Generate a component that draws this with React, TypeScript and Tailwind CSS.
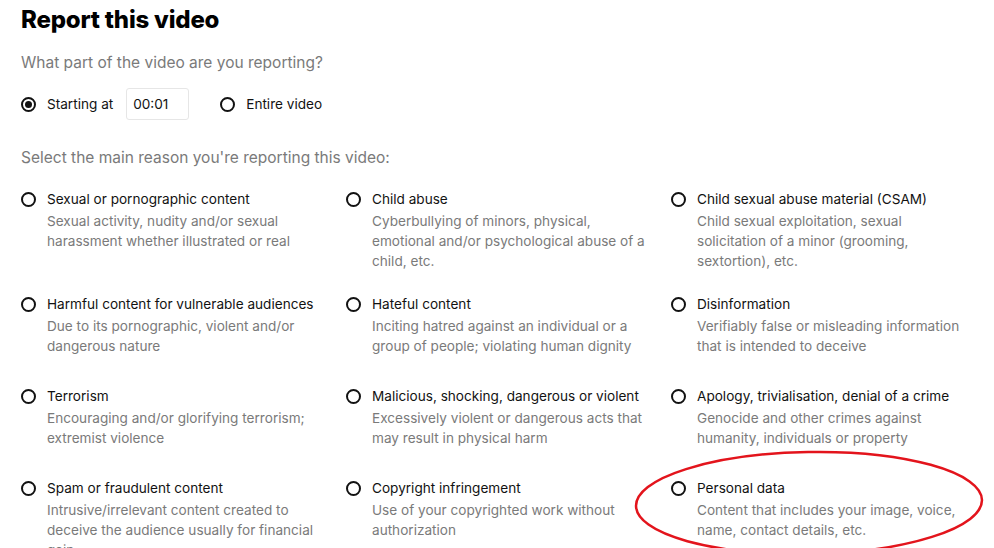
import React from "react";

type Item = { title: string; lines: string[] };

const items: Item[] = [
  { title: "Sexual or pornographic content", lines: ["Sexual activity, nudity and/or sexual", "harassment whether illustrated or real"] },
  { title: "Child abuse", lines: ["Cyberbullying of minors, physical,", "emotional and/or psychological abuse of a", "child, etc."] },
  { title: "Child sexual abuse material (CSAM)", lines: ["Child sexual exploitation, sexual", "solicitation of a minor (grooming,", "sextortion), etc."] },
  { title: "Harmful content for vulnerable audiences", lines: ["Due to its pornographic, violent and/or", "dangerous nature"] },
  { title: "Hateful content", lines: ["Inciting hatred against an individual or a", "group of people; violating human dignity"] },
  { title: "Disinformation", lines: ["Verifiably false or misleading information", "that is intended to deceive"] },
  { title: "Terrorism", lines: ["Encouraging and/or glorifying terrorism;", "extremist violence"] },
  { title: "Malicious, shocking, dangerous or violent", lines: ["Excessively violent or dangerous acts that", "may result in physical harm"] },
  { title: "Apology, trivialisation, denial of a crime", lines: ["Genocide and other crimes against", "humanity, individuals or property"] },
  { title: "Spam or fraudulent content", lines: ["Intrusive/irrelevant content created to", "deceive the audience usually for financial", "gain"] },
  { title: "Copyright infringement", lines: ["Use of your copyrighted work without", "authorization"] },
  { title: "Personal data", lines: ["Content that includes your image, voice,", "name, contact details, etc."] },
];

function Radio({ checked = false }: { checked?: boolean }) {
  return (
    <span className="flex h-[15px] w-[15px] shrink-0 items-center justify-center rounded-full border-2 border-[#121212]">
      {checked && <span className="h-[7px] w-[7px] rounded-full bg-[#121212]" />}
    </span>
  );
}

export default function App() {
  return (
    <div
      className="relative h-[548px] w-[994px] overflow-hidden bg-white px-[21px] text-[#121212]"
      style={{ fontFamily: "Inter, 'Noto Sans', sans-serif" }}
    >
      <h1 className="pt-[5px] text-[24px] font-extrabold leading-[30px] tracking-[-0.2px] text-black">Report this video</h1>
      <p className="mt-[17px] text-[15.5px] leading-[22px] text-[#7a7a7a]">What part of the video are you reporting?</p>
      <div className="mt-[14px] flex items-center">
        <Radio checked />
        <span className="ml-[11px] text-[13.6px]">Starting at</span>
        <div className="ml-[13px] flex h-[32px] w-[63px] items-center rounded-[3px] border border-[#e6e6e6] px-[6px] text-[13.6px]">00:01</div>
        <span className="ml-[31px]">
          <Radio />
        </span>
        <span className="ml-[11px] text-[13.6px]">Entire video</span>
      </div>
      <p className="mt-[27px] text-[15.5px] leading-[22px] text-[#7a7a7a]">Select the main reason you're reporting this video:</p>
      <div className="mt-[19px] grid grid-cols-[300px_300px_300px] gap-x-[25px] gap-y-[22px]">
        {items.map((it) => (
          <div key={it.title} className="flex min-h-[70px] items-start">
            <span className="mt-[4px]">
              <Radio />
            </span>
            <div className="ml-[11px]">
              <div className="whitespace-nowrap text-[13.6px] leading-[23px] text-[#121212]">{it.title}</div>
              <div className="text-[13.6px] leading-[20px] text-[#7a7a7a]">
                {it.lines.map((l, i) => (
                  <div key={i} className="whitespace-nowrap">{l}</div>
                ))}
              </div>
            </div>
          </div>
        ))}
      </div>
      <svg className="pointer-events-none absolute left-0 top-0" width="994" height="548">
        <ellipse cx="809" cy="503" rx="173" ry="51" fill="none" stroke="#e3141c" strokeWidth="2.5" transform="rotate(-1 809 503)" />
      </svg>
    </div>
  );
}
